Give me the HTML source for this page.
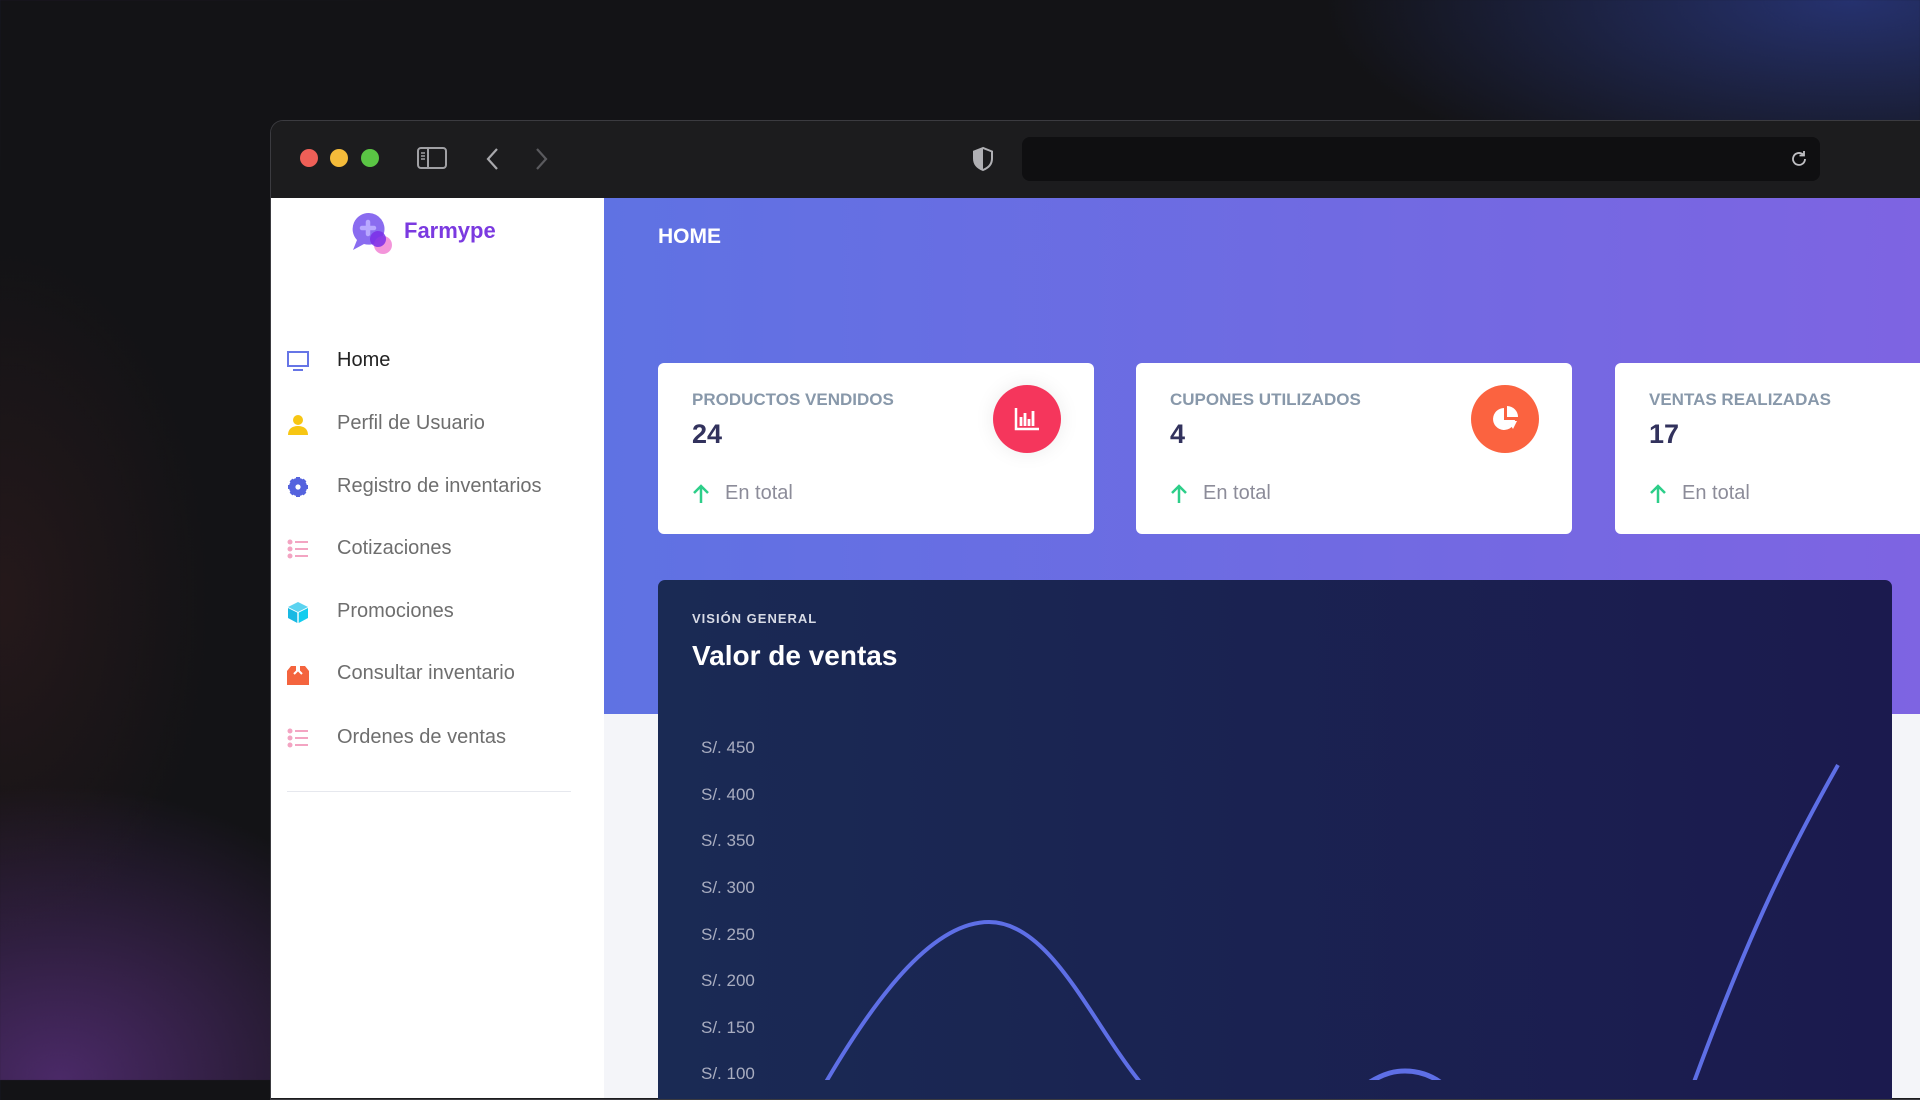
<!DOCTYPE html>
<html><head><meta charset="utf-8"><style>
*{margin:0;padding:0;box-sizing:border-box}
body{width:1920px;height:1080px;overflow:hidden;position:relative;font-family:"Liberation Sans",sans-serif;
background:radial-gradient(ellipse 520px 420px at 60px 1080px,rgba(120,60,170,.55),transparent 70%),
radial-gradient(ellipse 700px 260px at 1850px 0px,rgba(50,70,170,.6),transparent 75%),
radial-gradient(ellipse 300px 500px at 0px 600px,rgba(90,40,40,.25),transparent 70%),#131316}
.win{position:absolute;left:270px;top:120px;width:1660px;height:980px;border-radius:13px 0 0 0;background:#1c1c1e;border:1px solid #3b3b40;overflow:hidden}
.tb{position:absolute;left:0;top:0;right:0;height:77px;background:#1c1c1e}
.dot{position:absolute;top:28px;width:18px;height:18px;border-radius:50%}
.url{position:absolute;left:751px;top:16px;width:798px;height:44px;background:#0f0f11;border-radius:8px}
.side{position:absolute;left:0;top:77px;width:333px;height:900px;background:#fff}
.main{position:absolute;left:333px;top:77px;width:1330px;height:900px;background:#f4f5f9}
.hdr{position:absolute;left:0;top:0;width:100%;height:516px;background:linear-gradient(90deg,#5f72e3,#7e64e2)}
.nav{position:absolute;left:0;font-size:20px;color:#6e6e6e}
.nav .ic{position:absolute;left:15px;top:-11px;width:24px;height:24px}
.nav span{position:absolute;left:66px;top:-11px;white-space:nowrap}
.card{position:absolute;top:165px;width:436px;height:171px;background:#fff;border-radius:6px}
.card .t{position:absolute;left:34px;top:27px;font-size:17px;font-weight:bold;color:#8898aa;white-space:nowrap}
.card .n{position:absolute;left:34px;top:56px;font-size:27px;font-weight:bold;color:#32325d}
.card .e{position:absolute;left:67px;top:119px;font-size:20px;color:#8c8c99}
.card .a{position:absolute;left:34px;top:121px}
.card .c{position:absolute;left:335px;top:22px;width:68px;height:68px;border-radius:50%}
.chart{position:absolute;left:55px;top:382px;width:1234px;height:530px;border-radius:7px;background:linear-gradient(90deg,#1a2a54,#1b1a4e)}
.yl{position:absolute;left:43px;font-size:17px;color:#a9adc0}
</style></head><body>
<div class="win">
 <div class="tb">
  <div class="dot" style="left:29px;background:#ee5f57"></div>
  <div class="dot" style="left:59px;background:#f4bb3a"></div>
  <div class="dot" style="left:90px;background:#5ac544"></div>
  <svg style="position:absolute;left:146px;top:26px" width="30" height="22" viewBox="0 0 30 22"><rect x="1" y="1" width="28" height="20" rx="3" fill="none" stroke="#a0a0a4" stroke-width="2"/><line x1="11" y1="1" x2="11" y2="21" stroke="#a0a0a4" stroke-width="2"/><path d="M4 6h4M4 9h4M4 12h4" stroke="#a0a0a4" stroke-width="1.5"/></svg>
  <svg style="position:absolute;left:214px;top:26px" width="14" height="24"><path d="M12 2L3 12l9 10" fill="none" stroke="#a8a8ac" stroke-width="2.2"/></svg>
  <svg style="position:absolute;left:264px;top:26px" width="14" height="24"><path d="M2 2l9 10-9 10" fill="none" stroke="#5a5a5e" stroke-width="2.2"/></svg>
  <svg style="position:absolute;left:701px;top:25px" width="22" height="26" viewBox="0 0 22 26"><path d="M11 2L2 5.5v7c0 6 4 9.5 9 11.5 5-2 9-5.5 9-11.5v-7z" fill="none" stroke="#b0b0b4" stroke-width="2"/><path d="M11 2v22c-5-2-9-5.5-9-11.5v-7z" fill="#b0b0b4"/></svg>
  <div class="url"></div>
  <svg style="position:absolute;left:1518px;top:28px" width="20" height="20" viewBox="0 0 20 20"><path d="M16 10a6 6 0 1 1-2-4.5" fill="none" stroke="#c0c0c4" stroke-width="1.8"/><path d="M15 2v4.5h-4.5" fill="none" stroke="#c0c0c4" stroke-width="1.8"/></svg>
 </div>
 <div class="side">
  <svg style="position:absolute;left:78px;top:12px" width="46" height="46" viewBox="0 0 46 46"><path d="M20 3a16 16 0 0 1 15 20 16 16 0 0 1-20 11L4 40l4-10A16 16 0 0 1 20 3z" fill="#8a6cf0"/><circle cx="34" cy="35" r="9" fill="#f28ad6" opacity=".9"/><circle cx="29" cy="29" r="8" fill="#7a2ee8" opacity=".85"/><path d="M19 12v12M13 18h12" stroke="#b9a8ff" stroke-width="4.5" stroke-linecap="round"/></svg>
  <div style="position:absolute;left:133px;top:20px;font-size:22px;font-weight:bold;color:#7b3ae0">Farmype</div>
  <div class="nav" style="top:162px;color:#222"><svg class="ic" viewBox="0 0 24 24"><rect x="2" y="3" width="20" height="14" fill="none" stroke="#6675e6" stroke-width="2"/><rect x="7" y="20" width="10" height="2" fill="#6675e6"/></svg><span>Home</span></div>
  <div class="nav" style="top:225px"><svg class="ic" viewBox="0 0 24 24"><circle cx="12" cy="8" r="5" fill="#f7c613"/><path d="M2 23c0-6 4-9 10-9s10 3 10 9z" fill="#f7c613"/></svg><span>Perfil de Usuario</span></div>
  <div class="nav" style="top:288px"><svg class="ic" viewBox="0 0 24 24"><circle cx="12" cy="12" r="7" fill="none" stroke="#5563de" stroke-width="4"/><path d="M12 2v20M2 12h20M5 5l14 14M19 5L5 19" stroke="#5563de" stroke-width="4"/><circle cx="12" cy="12" r="2.6" fill="#fff"/></svg><span>Registro de inventarios</span></div>
  <div class="nav" style="top:350px"><svg class="ic" viewBox="0 0 24 24"><g fill="#f3a4c2"><circle cx="4" cy="5" r="2.5"/><circle cx="4" cy="12" r="2.5"/><circle cx="4" cy="19" r="2.5"/><rect x="9" y="4" width="13" height="2"/><rect x="9" y="11" width="13" height="2"/><rect x="9" y="18" width="13" height="2"/></g></svg><span>Cotizaciones</span></div>
  <div class="nav" style="top:413px"><svg class="ic" viewBox="0 0 24 24"><path d="M12 2l10 5-10 5L2 7z" fill="#5bd3f0"/><path d="M2 8l9.3 4.6V23L2 18z" fill="#19b9e3"/><path d="M22 8l-9.3 4.6V23L22 18z" fill="#11cdef"/></svg><span>Promociones</span></div>
  <div class="nav" style="top:475px"><svg class="ic" viewBox="0 0 24 24"><path d="M1 9h22v14H1z" fill="#f4643e"/><path d="M1 9l4-5h5v5zM23 9l-4-5h-5v5z" fill="#f4643e"/><path d="M8 12l4-4 4 4" fill="none" stroke="#fff" stroke-width="2"/></svg><span>Consultar inventario</span></div>
  <div class="nav" style="top:539px"><svg class="ic" viewBox="0 0 24 24"><g fill="#f3a4c2"><circle cx="4" cy="5" r="2.5"/><circle cx="4" cy="12" r="2.5"/><circle cx="4" cy="19" r="2.5"/><rect x="9" y="4" width="13" height="2"/><rect x="9" y="11" width="13" height="2"/><rect x="9" y="18" width="13" height="2"/></g></svg><span>Ordenes de ventas</span></div>
  <div style="position:absolute;left:16px;top:593px;width:284px;height:1px;background:#e6e8ee"></div>
 </div>
 <div class="main">
  <div class="hdr"></div>
  <div style="position:absolute;left:54px;top:27px;font-size:21px;font-weight:bold;color:#fff">HOME</div>
  <div class="card" style="left:54px"><div class="t">PRODUCTOS VENDIDOS</div><div class="n">24</div>
   <svg class="a" width="18" height="20" viewBox="0 0 18 20"><path d="M9 19V3M2 9l7-7 7 7" fill="none" stroke="#2dce89" stroke-width="2.5"/></svg><div class="e">En total</div>
   <div class="c" style="background:#f5365c;box-shadow:0 0 20px rgba(0,0,0,.08)"><svg style="position:absolute;left:21px;top:22px" width="26" height="24" viewBox="0 0 26 24"><path d="M2 1v21h23" fill="none" stroke="#fff" stroke-width="2.5"/><path d="M7 10v9M11 6v13M15 12v7M19 4v15" stroke="#fff" stroke-width="2.8"/></svg></div></div>
  <div class="card" style="left:532px"><div class="t">CUPONES UTILIZADOS</div><div class="n">4</div>
   <svg class="a" width="18" height="20" viewBox="0 0 18 20"><path d="M9 19V3M2 9l7-7 7 7" fill="none" stroke="#2dce89" stroke-width="2.5"/></svg><div class="e">En total</div>
   <div class="c" style="background:#fb6340"><svg style="position:absolute;left:20px;top:20px" width="28" height="28" viewBox="0 0 28 28"><path d="M13 3a11 11 0 1 0 11 12H13z" fill="#fff"/><path d="M16 1v11h11A11 11 0 0 0 16 1z" fill="#fff"/><path d="M17 16h9l-4 8z" fill="#fff"/></svg></div></div>
  <div class="card" style="left:1011px"><div class="t">VENTAS REALIZADAS</div><div class="n">17</div>
   <svg class="a" width="18" height="20" viewBox="0 0 18 20"><path d="M9 19V3M2 9l7-7 7 7" fill="none" stroke="#2dce89" stroke-width="2.5"/></svg><div class="e">En total</div></div>
  <div class="chart" style="left:54px">
   <div style="position:absolute;left:34px;top:31px;font-size:13px;font-weight:bold;letter-spacing:1px;color:#d8dbe6">VISIÓN GENERAL</div>
   <div style="position:absolute;left:34px;top:60px;font-size:28px;font-weight:bold;color:#fff">Valor de ventas</div>
   <div class="yl" style="top:158px">S/. 450</div>
   <div class="yl" style="top:205px">S/. 400</div>
   <div class="yl" style="top:251px">S/. 350</div>
   <div class="yl" style="top:298px">S/. 300</div>
   <div class="yl" style="top:345px">S/. 250</div>
   <div class="yl" style="top:391px">S/. 200</div>
   <div class="yl" style="top:438px">S/. 150</div>
   <div class="yl" style="top:484px">S/. 100</div>
  </div>
 </div>
</div>
<svg style="position:absolute;left:0;top:0" width="1920" height="1080">
 <path d="M826 1082C880 990 935 922 989 922C1050 922 1090 1020 1140 1082" fill="none" stroke="#5e6fe6" stroke-width="4"/>
 <path d="M1370 1082C1385 1073 1395 1071 1405 1071C1418 1071 1430 1075 1440 1082" fill="none" stroke="#5e6fe6" stroke-width="5"/>
 <path d="M1694 1082C1750 930 1790 850 1838 765" fill="none" stroke="#5e6fe6" stroke-width="4"/>
</svg>
</body></html>
